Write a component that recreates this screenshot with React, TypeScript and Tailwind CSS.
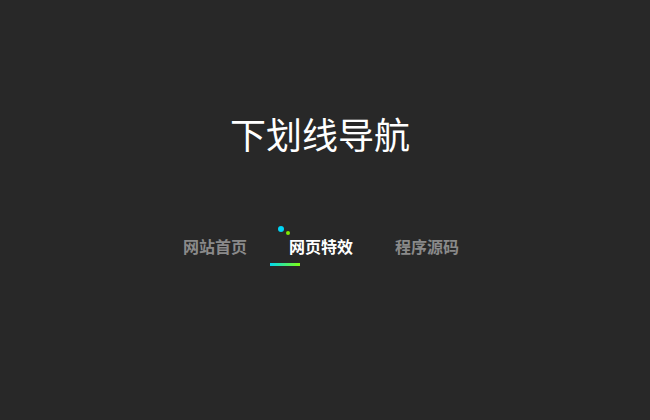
export default function App() {
  const font = { fontFamily: '"Noto Sans CJK SC", "Noto Sans", sans-serif' };
  return (
    <div className="w-[650px] h-[420px] bg-[#282828] flex flex-col items-center" style={font}>
      <h1 className="mt-[115px] text-[36px] leading-[36px] text-white font-normal mr-[10px]">下划线导航</h1>
      <nav className="mt-[87px] flex gap-[42px] pr-[8px]">
        <span className="w-[64px] text-[16px] leading-[16px] font-bold text-[#8a8a8a]">网站首页</span>
        <span className="relative w-[64px] text-[16px] leading-[16px] font-bold text-white">
          网页特效
          <span className="absolute left-[-11px] top-[-12px] w-[6px] h-[6px] rounded-full bg-[#00d5f5]" />
          <span className="absolute left-[-3px] top-[-7px] w-[4px] h-[4px] rounded-full bg-[#80e800]" />
          <span className="absolute left-[-19px] top-[25px] w-[30px] h-[3px] bg-[linear-gradient(to_right,#00d8f0,#80ff10)]" />
        </span>
        <span className="w-[64px] text-[16px] leading-[16px] font-bold text-[#8a8a8a]">程序源码</span>
      </nav>
    </div>
  );
}
